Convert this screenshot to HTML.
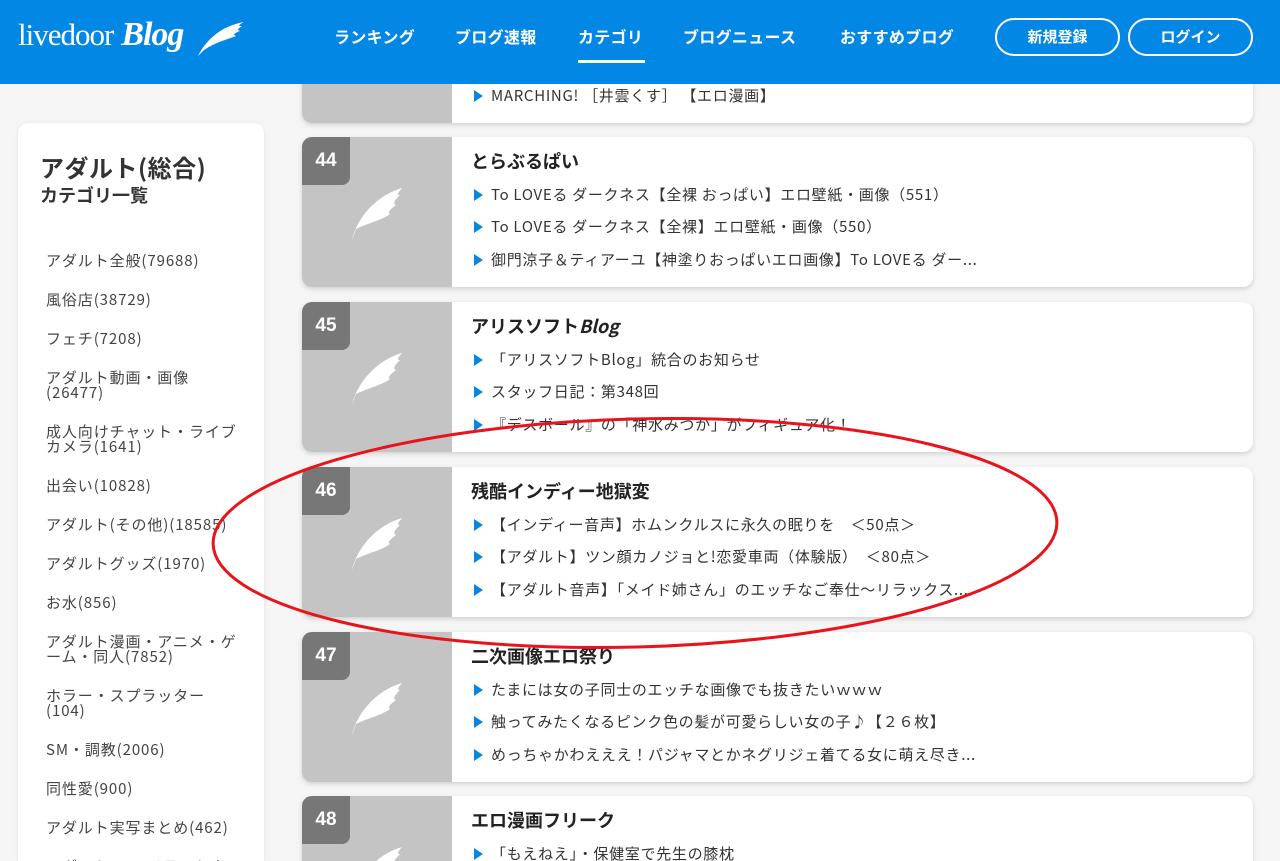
<!DOCTYPE html>
<html><head><meta charset="utf-8"><style>
*{margin:0;padding:0;box-sizing:border-box}
html,body{width:1280px;height:861px;overflow:hidden}
body{background:#f5f5f5;font-family:"Noto Sans CJK JP","Liberation Sans",sans-serif;color:#333;position:relative}
.hd{position:absolute;left:0;top:0;width:1280px;height:84px;background:#0387e5;z-index:5}
.logo{position:absolute;left:18px;top:16px;color:#fff;font-family:"Liberation Serif",serif;font-size:31px;letter-spacing:-1px}
.logo i{font-weight:bold;font-size:34px;margin-left:8px}
.nav{position:absolute;top:24px;color:#fff;font-weight:bold;font-size:16px;line-height:24px;letter-spacing:.3px}
.btn{position:absolute;top:18px;width:125px;height:38px;border:2px solid #fff;border-radius:19px;color:#fff;font-weight:bold;font-size:15px;text-align:center;line-height:34px}
.side{position:absolute;left:18px;top:123px;width:246px;height:738px;background:#fff;border-radius:10px 10px 0 0;box-shadow:0 1px 4px rgba(0,0,0,.08);overflow:hidden}
.side h1{position:absolute;left:22px;top:28px;font-size:24px;line-height:32px;letter-spacing:.5px}
.side h2{position:absolute;left:22px;top:59px;font-size:18px;line-height:26px}
.side ul{position:absolute;left:28px;top:118px;list-style:none;font-size:15px;color:#444;white-space:nowrap;letter-spacing:.9px}
.side li{line-height:15px;padding:12px 0}
.card{position:absolute;left:302px;width:951px;height:150px;background:#fff;border-radius:10px;box-shadow:0 2px 5px rgba(0,0,0,.15);overflow:hidden}
.img{position:absolute;left:0;top:0;width:150px;height:150px;background:#c4c4c4}
.num{position:absolute;left:0;top:0;width:48px;height:48px;background:#777;color:#fff;font-weight:bold;font-size:19px;text-align:center;line-height:48px;border-bottom-right-radius:8px;font-family:"Liberation Sans",sans-serif}
.img svg{position:absolute;left:50px;top:50px}
.t{position:absolute;left:169px;top:10px;font-weight:bold;font-size:18px;line-height:28px;color:#222}
.it{position:absolute;left:172px;font-size:15px;line-height:22px;color:#333;white-space:nowrap;letter-spacing:.7px}
.it:before{content:"";display:inline-block;width:0;height:0;border-left:9px solid #0a86e0;border-top:6px solid transparent;border-bottom:6px solid transparent;margin-right:8px;vertical-align:-1px}
</style></head><body>
<div class="hd">
<div class="logo">livedoor<i>Blog</i></div>
<svg style="position:absolute;left:196px;top:20px" width="50" height="38" viewBox="0 0 50 38"><path d="M2 36 C10 20 25 6 48 2 C40 6 44 6 46 6 C40 10 42 10 44 11 C36 14 38 15 40 16 C30 20 20 22 8 30 Z" fill="#fff"/></svg>
<div class="nav" style="left:334px">ランキング</div>
<div class="nav" style="left:455px">ブログ速報</div>
<div class="nav" style="left:578px">カテゴリ</div>
<div style="position:absolute;left:578px;top:60px;width:67px;height:3px;background:#fff"></div>
<div class="nav" style="left:683px">ブログニュース</div>
<div class="nav" style="left:840px">おすすめブログ</div>
<div class="btn" style="left:995px">新規登録</div>
<div class="btn" style="left:1128px">ログイン</div>
</div>
<div class="side">
<h1>アダルト(総合)</h1><h2>カテゴリ一覧</h2>
<ul>
<li>アダルト全般(79688)</li><li>風俗店(38729)</li><li>フェチ(7208)</li>
<li>アダルト動画・画像<br>(26477)</li><li>成人向けチャット・ライブ<br>カメラ(1641)</li>
<li>出会い(10828)</li><li>アダルト(その他)(18585)</li><li>アダルトグッズ(1970)</li>
<li>お水(856)</li><li>アダルト漫画・アニメ・ゲ<br>ーム・同人(7852)</li><li>ホラー・スプラッター<br>(104)</li>
<li>SM・調教(2006)</li><li>同性愛(900)</li><li>アダルト実写まとめ(462)</li><li>アダルトCG・イラストま</li>
</ul></div>

<div class="card" style="top:-27px"><div class="img"></div><div class="it" style="top:112px">MARCHING! ［井雲くす］ 【エロ漫画】</div></div>

<div class="card" style="top:137px"><div class="img"><div class="num">44</div><svg width="50" height="55" viewBox="0 0 50 55"><path d="M0 53 C4 35 20 10 50 1 C44 8 46 8 48 8 C40 16 42 17 44 18 C36 24 36 26 38 27 C28 34 16 36 4 42 Z" fill="#fff"/></svg></div>
<div class="t">とらぶるぱい</div>
<div class="it" style="top:47px">To LOVEる ダークネス【全裸 おっぱい】エロ壁紙・画像（551）</div>
<div class="it" style="top:79px">To LOVEる ダークネス【全裸】エロ壁紙・画像（550）</div>
<div class="it" style="top:112px">御門涼子＆ティアーユ【神塗りおっぱいエロ画像】To LOVEる ダー...</div></div>

<div class="card" style="top:302px"><div class="img"><div class="num">45</div><svg width="50" height="55" viewBox="0 0 50 55"><path d="M0 53 C4 35 20 10 50 1 C44 8 46 8 48 8 C40 16 42 17 44 18 C36 24 36 26 38 27 C28 34 16 36 4 42 Z" fill="#fff"/></svg></div>
<div class="t">アリスソフト<i>Blog</i></div>
<div class="it" style="top:47px">「アリスソフトBlog」統合のお知らせ</div>
<div class="it" style="top:79px">スタッフ日記：第348回</div>
<div class="it" style="top:112px">『デスボール』の「神水みつか」がフィギュア化！</div></div>

<div class="card" style="top:467px"><div class="img"><div class="num">46</div><svg width="50" height="55" viewBox="0 0 50 55"><path d="M0 53 C4 35 20 10 50 1 C44 8 46 8 48 8 C40 16 42 17 44 18 C36 24 36 26 38 27 C28 34 16 36 4 42 Z" fill="#fff"/></svg></div>
<div class="t">残酷インディー地獄変</div>
<div class="it" style="top:47px">【インディー音声】ホムンクルスに永久の眠りを　＜50点＞</div>
<div class="it" style="top:79px">【アダルト】ツン顔カノジョと!恋愛車両（体験版）　＜80点＞</div>
<div class="it" style="top:112px">【アダルト音声】「メイド姉さん」のエッチなご奉仕～リラックス...</div></div>

<div class="card" style="top:632px"><div class="img"><div class="num">47</div><svg width="50" height="55" viewBox="0 0 50 55"><path d="M0 53 C4 35 20 10 50 1 C44 8 46 8 48 8 C40 16 42 17 44 18 C36 24 36 26 38 27 C28 34 16 36 4 42 Z" fill="#fff"/></svg></div>
<div class="t">二次画像エロ祭り</div>
<div class="it" style="top:47px">たまには女の子同士のエッチな画像でも抜きたいｗｗｗ</div>
<div class="it" style="top:79px">触ってみたくなるピンク色の髪が可愛らしい女の子♪【２６枚】</div>
<div class="it" style="top:112px">めっちゃかわえええ！パジャマとかネグリジェ着てる女に萌え尽き...</div></div>

<div class="card" style="top:796px;height:65px;border-radius:10px 10px 0 0"><div class="img"><div class="num">48</div><svg width="50" height="55" viewBox="0 0 50 55"><path d="M0 53 C4 35 20 10 50 1 C44 8 46 8 48 8 C40 16 42 17 44 18 C36 24 36 26 38 27 C28 34 16 36 4 42 Z" fill="#fff"/></svg></div>
<div class="t">エロ漫画フリーク</div>
<div class="it" style="top:47px">「もえねえ」・保健室で先生の膝枕</div></div>

<svg style="position:absolute;left:0;top:0;z-index:4" width="1280" height="861"><ellipse cx="635" cy="533" rx="422" ry="114" transform="rotate(-1.5 635 533)" fill="none" stroke="#e8141b" stroke-width="3"/></svg>
</body></html>
